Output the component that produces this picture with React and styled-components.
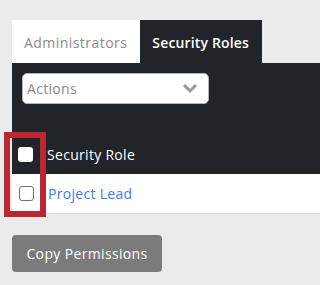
import React from "react";
import styled, { createGlobalStyle } from "styled-components";

const Global = createGlobalStyle`
  html, body { margin: 0; padding: 0; background: #ebebeb; overflow: hidden; }
  body { font-family: "Open Sans", "Noto Sans", sans-serif; letter-spacing: 0.3px; }
`;

const Page = styled.div`
  position: relative;
  height: 285px;
  padding: 20px 0 0 12px;
  box-sizing: border-box;
`;

const Tabs = styled.div`
  display: flex;
  height: 43px;
`;

const Tab = styled.div`
  display: flex;
  align-items: center;
  padding: 1px 13px 0 12px;
  font-size: 14px;
  background: ${(p) => (p.$active ? "#212429" : "#ffffff")};
  color: ${(p) => (p.$active ? "#ffffff" : "#8a8a8a")};
  font-weight: ${(p) => (p.$active ? 600 : 400)};
  letter-spacing: ${(p) => (p.$active ? "0.15px" : "0.45px")};
  box-sizing: border-box;
`;

const Panel = styled.div`
  background: #212429;
  padding: 10px 0 0 10px;
`;

const Select = styled.div`
  width: 187px;
  height: 31px;
  box-sizing: border-box;
  background: #ffffff;
  border: 1px solid #b5b5b5;
  border-radius: 5px;
  display: flex;
  align-items: center;
  justify-content: space-between;
  padding: 0 10px 0 4px;
  color: #8a8a8a;
  font-size: 14px;
`;

const HeaderRow = styled.div`
  display: flex;
  align-items: center;
  height: 44px;
  margin-top: 26px;
  margin-left: -10px;
  padding: 4px 0 0 6px;
  box-sizing: border-box;
  color: #ffffff;
  font-size: 14px;
  font-weight: 500;
`;

const BodyRow = styled.div`
  display: flex;
  align-items: center;
  height: 40px;
  box-sizing: border-box;
  background: #ffffff;
  border-bottom: 1px solid #d8d8d8;
  padding-left: 7px;
  font-size: 14px;
`;

const Box = styled.span`
  display: inline-block;
  width: 15px;
  height: 15px;
  box-sizing: border-box;
  border-radius: 3px;
  background: #ffffff;
  border: ${(p) => (p.$outline ? "1px solid #707070" : "none")};
  margin-right: 14px;
  flex-shrink: 0;
`;

const Link = styled.a`
  color: #3d7bf0;
  text-decoration: none;
`;

const Button = styled.button`
  margin-top: 21px;
  width: 150px;
  height: 37px;
  border: none;
  border-radius: 4px;
  background: #7b7b7b;
  color: #ffffff;
  font-family: "Open Sans", "Noto Sans", sans-serif;
  letter-spacing: 0.35px;
  font-size: 14px;
  font-weight: 500;
  padding: 0;
`;

const Highlight = styled.div`
  position: absolute;
  left: 4px;
  top: 132px;
  width: 42px;
  height: 85px;
  box-sizing: border-box;
  border: 6px solid #b8282e;
  pointer-events: none;
`;

export default function App() {
  return (
    <>
      <Global />
      <Page>
        <Tabs>
          <Tab>Administrators</Tab>
          <Tab $active>Security Roles</Tab>
        </Tabs>
        <Panel>
          <Select>
            <span>Actions</span>
            <svg width="16" height="11" viewBox="0 0 16 11">
              <path d="M2 2 L8 8 L14 2" fill="none" stroke="#999" strokeWidth="3" />
            </svg>
          </Select>
          <HeaderRow>
            <Box />
            <span>Security Role</span>
          </HeaderRow>
        </Panel>
        <BodyRow>
          <Box $outline />
          <Link href="#">Project Lead</Link>
        </BodyRow>
        <Button>Copy Permissions</Button>
        <Highlight />
      </Page>
    </>
  );
}
